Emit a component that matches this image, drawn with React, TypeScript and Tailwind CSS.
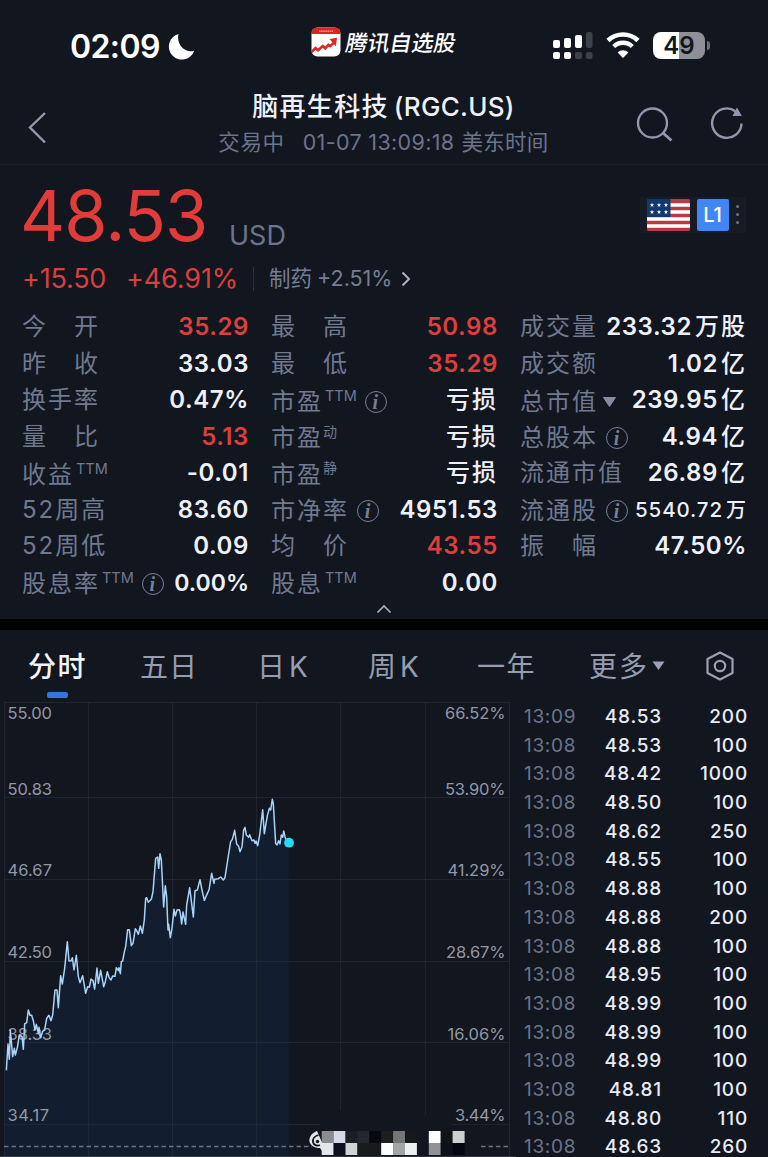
import React from "react";

type Tone = "up" | "plain";

interface Stat {
  label: string;
  sup?: string;
  info?: boolean;
  caret?: boolean;
  value?: string;
  unit?: string;
  tone?: Tone;
  small?: boolean;
  tight?: boolean;
  low?: boolean;
}

const columns: Stat[][] = [
  [
    { label: "今　开", value: "35.29", tone: "up" },
    { label: "昨　收", value: "33.03" },
    { label: "换手率", value: "0.47%" },
    { label: "量　比", value: "5.13", tone: "up" },
    { label: "收益", sup: "TTM", value: "-0.01", low: true },
    { label: "52周高", value: "83.60" },
    { label: "52周低", value: "0.09" },
    { label: "股息率", sup: "TTM", info: true, value: "0.00%", low: true, tight: true },
  ],
  [
    { label: "最　高", value: "50.98", tone: "up" },
    { label: "最　低", value: "35.29", tone: "up" },
    { label: "市盈", sup: "TTM", info: true, unit: "亏损", low: true },
    { label: "市盈", sup: "动", unit: "亏损", low: true },
    { label: "市盈", sup: "静", unit: "亏损", low: true },
    { label: "市净率", info: true, value: "4951.53", low: true },
    { label: "均　价", value: "43.55", tone: "up" },
    { label: "股息", sup: "TTM", value: "0.00", low: true },
  ],
  [
    { label: "成交量", value: "233.32", unit: "万股" },
    { label: "成交额", value: "1.02", unit: "亿" },
    { label: "总市值", caret: true, value: "239.95", unit: "亿", low: true },
    { label: "总股本", info: true, value: "4.94", unit: "亿", low: true },
    { label: "流通市值", value: "26.89", unit: "亿" },
    { label: "流通股", info: true, value: "5540.72", unit: "万", small: true, low: true },
    { label: "振　幅", value: "47.50%" },
  ],
];

const trades: [string, string, string][] = [
  ["13:09", "48.53", "200"],
  ["13:08", "48.53", "100"],
  ["13:08", "48.42", "1000"],
  ["13:08", "48.50", "100"],
  ["13:08", "48.62", "250"],
  ["13:08", "48.55", "100"],
  ["13:08", "48.88", "100"],
  ["13:08", "48.88", "200"],
  ["13:08", "48.88", "100"],
  ["13:08", "48.95", "100"],
  ["13:08", "48.99", "100"],
  ["13:08", "48.99", "100"],
  ["13:08", "48.99", "100"],
  ["13:08", "48.81", "100"],
  ["13:08", "48.80", "110"],
  ["13:08", "48.63", "260"],
];

// Intraday line, in thirds of a pixel, measured from 78px below the plot's top.
const series =
  "19,871 24,792 28,838 31,750 38,830 43,805 46,825 52,802 58,765 66,770 70,808 74,732 80,728 85,690 90,706 95,706 100,722 105,750 109,733 115,760 117,742 122,773 128,754 134,750 140,715 147,706 153,722 158,705 165,630 171,630 175,683 182,587 187,612 194,565 202,485 207,543 213,543 217,533 222,570 229,526 235,590 240,608 248,587 257,640 263,620 268,622 273,597 279,602 284,627 291,564 295,610 302,571 311,620 316,605 322,575 327,592 333,600 338,588 345,589 349,563 355,572 357,563 361,581 364,545 368,543 372,520 377,500 383,449 388,449 394,497 399,490 406,446 412,456 415,463 421,438 427,460 433,420 437,355 440,353 445,367 454,358 459,335 467,235 473,231 476,265 480,221 484,240 491,381 496,317 500,350 504,450 506,433 511,473 516,445 522,388 526,408 531,390 538,389 541,400 545,432 549,396 557,433 560,375 569,323 580,411 585,332 592,330 600,299 606,330 613,361 622,340 627,330 635,280 642,310 644,298 655,296 662,291 670,300 675,293 685,228 692,185 697,178 704,151 710,192 716,199 720,215 726,200 731,150 735,142 739,165 746,172 749,164 756,182 762,180 765,190 768,183 773,197 779,165 788,89 793,161 802,107 808,85 812,90 817,58 820,72 827,190 831,195 836,182 840,192 844,165 848,172 851,153 855,170 860,185 866,188";

const leftAxis: [string, number, number][] = [
  ["55.00", 719, 44.5],
  ["50.83", 794.7, 44.5],
  ["46.67", 876.2, 44.5],
  ["42.50", 958.2, 44.5],
  ["38.33", 1039.5, 44.5],
  ["34.17", 1121, 41.5],
];

const rightAxis: [string, number, number][] = [
  ["66.52%", 719, 60.5],
  ["53.90%", 794.7, 60.5],
  ["41.29%", 876.2, 58],
  ["28.67%", 958.2, 59.5],
  ["16.06%", 1039.5, 58],
  ["3.44%", 1121, 50.5],
];

const mosaic = [
  ["#8b8c90", "#d4d9e6", "#1b1e22", "#23272e", "#060910", "#1b1f20", "#747676", "#15181c", "#12161f", "#fbfdff", "#111417", "#cacfd0"],
  ["#e4e6ec", "#0d111c", "#d0d4d4", "#191c1b", "#191a1b", "#fcfefe", "#a2a4a6", "#ecf0f0", "#11151f", "#929296", "#0f111a", "#03070f"],
];

function InfoIcon() {
  return (
    <span className="flex h-[22px] w-[22px] shrink-0 items-center justify-center rounded-full border-[1.5px] border-[#767f98] pr-[1px] font-['Liberation_Serif',serif] text-[20px] leading-[18px] font-bold text-[#767f98] italic">
      i
    </span>
  );
}

function StatRow({ stat }: { stat: Stat }) {
  const tone = stat.tone === "up" ? "text-[#db3f3e]" : "text-[#eef1f9]";
  const size = stat.small
    ? "text-[20.5px] leading-[36px] font-medium tracking-[0.9px]"
    : stat.tight
      ? "text-[23px] leading-[36px] font-semibold tracking-[0px]"
      : "text-[24px] leading-[36px] font-semibold tracking-[0.6px]";
  return (
    <div className="flex h-[36.5px] items-center justify-between whitespace-nowrap">
      <div className={`flex items-center text-[#70798f] ${stat.low ? "pt-[3px]" : ""}`}>
        <span className="text-[24px] leading-[36px] tracking-[2px]">{stat.label}</span>
        {stat.sup && (
          <span className={stat.sup === "TTM" ? "-mt-[12px] ml-[2px] text-[14.5px] leading-[18px] tracking-[0px]" : "-mt-[13px] text-[14px] leading-[18px]"}>
            {stat.sup}
          </span>
        )}
        {stat.info && (
          <span className="ml-[8px] block">
            <InfoIcon />
          </span>
        )}
        {stat.caret && (
          <svg className="ml-[5px] h-[10px] w-[13px]" viewBox="0 0 13 10">
            <path d="M.5.5h12l-6 9z" fill="#858da3" stroke="#858da3" strokeLinejoin="round" />
          </svg>
        )}
      </div>
      <div className={`flex items-center ${tone} ${stat.unit ? "" : "-mr-[1px]"}`}>
        {stat.value && <span className={size}>{stat.value}</span>}
        {stat.unit && (
          <span className={stat.small ? "ml-[3px] text-[20px] leading-[36px] font-medium" : "-mr-[1px] ml-[3px] text-[24px] leading-[36px] font-medium tracking-[2px]"}>
            {stat.unit}
          </span>
        )}
      </div>
    </div>
  );
}

function StatusBar() {
  return (
    <div className="flex h-[88px] items-start text-white">
      <span className="mt-[27px] ml-[70px] w-[98px] text-[32px] leading-[40px] font-semibold tracking-[-0.6px] whitespace-nowrap">02:09</span>
      <svg className="mt-[33px] h-[27px] w-[27px]" viewBox="0 0 27 27">
        <path d="M10.500 1A13 13 0 1 0 26.200 17.700C18 20.500 8 12.500 10.500 1Z" fill="#fff" />
      </svg>
      <svg className="mt-[27px] ml-[116px] h-[30px] w-[30px]" viewBox="0 0 30 30">
        <rect x="0.500" y="0.500" width="29" height="29" rx="6" fill="#fff" />
        <path d="M.5 7V6a5.500 5.500 0 0 1 5.500-5.500h18A5.500 5.500 0 0 1 29.500 6v1z" fill="#dd2420" />
        <path d="M8 4.200h14" stroke="#ee9792" strokeWidth="1.600" strokeDasharray="1.600 .5" />
        <path d="M.5 25l4-4 2.500 2.200 4.800-4.200 2.500 2.300 3-3.300 2 1.200 5-5" fill="none" stroke="#dc2725" strokeWidth="2.600" />
        <path d="M18.500 12l7.500-1.200-1.200 8.500z" fill="#dc2725" />
      </svg>
      <span className="mt-[26px] ml-[5px] w-[111px] -skew-x-[10deg] text-[22px] leading-[34px] font-medium whitespace-nowrap">腾讯自选股</span>
      <svg className="mt-[32px] ml-[96px] h-[28px] w-[40px]" viewBox="0 0 40 28" fill="#fff">
        <rect x="0" y="8" width="7" height="8" rx="2" />
        <rect x="11" y="6" width="7" height="10" rx="2" />
        <rect x="22" y="3" width="7" height="13" rx="2" />
        <rect x="33" y="0" width="6.500" height="16" rx="2" fill="#3d414a" />
        <rect x="0" y="20" width="7" height="7" rx="2" />
        <rect x="11" y="20" width="7" height="7" rx="2" />
        <rect x="22" y="20" width="7" height="7" rx="2" fill="#3d414a" />
        <rect x="33" y="20" width="6.500" height="7" rx="2" fill="#3d414a" />
      </svg>
      <svg className="mt-[32px] ml-[13px] h-[26px] w-[34px]" viewBox="0 0 34 26" fill="none">
        <path d="M2 8.500a21.800 21.800 0 0 1 30 0" stroke="#fff" strokeWidth="4.600" />
        <path d="M7.700 14.500a13.400 13.400 0 0 1 18.600 0" stroke="#fff" strokeWidth="4.400" />
        <path d="M17 26l-5.400-5.600a7.800 7.800 0 0 1 10.800 0z" fill="#fff" />
      </svg>
      <div className="mt-[32px] ml-[13px] flex items-center">
        <div className="flex h-[27px] w-[52px] items-center justify-center rounded-[8px] bg-[linear-gradient(90deg,#fff_50%,#8e9095_50%)] text-[24px] leading-[27px] font-semibold text-[#12161f]">
          49
        </div>
        <div className="ml-[1.5px] h-[9px] w-[3px] rounded-r-full bg-[#6c6f77]" />
      </div>
    </div>
  );
}

function TitleBar() {
  return (
    <div className="flex h-[77px] items-start border-b border-[#1a1d27]">
      <svg className="mt-[23px] ml-[27px] h-[34px] w-[20px]" viewBox="0 0 20 34" fill="none">
        <path d="M18 2L3 16.500 18 31.500" stroke="#9098ae" strokeWidth="2.400" />
      </svg>
      <div className="ml-[152px] flex w-[369px] flex-col items-center whitespace-nowrap">
        <div className="flex items-center text-[#eef1f9]">
          <span className="text-[26px] leading-[37px] font-medium tracking-[1.3px]">脑再生科技</span>
          <span className="ml-[5px] text-[26px] leading-[37px] font-medium tracking-[0.3px]">(RGC.US)</span>
        </div>
        <div className="flex text-[21.5px] leading-[35px] text-[#6b748b]">
          <span className="tracking-[0.6px]">交易中</span>
          <span className="ml-[18px] tracking-[0.35px]">01-07 13:09:18</span>
          <span className="ml-[7px] tracking-[0.3px]">美东时间</span>
        </div>
      </div>
      <svg className="mt-[18px] ml-[68px] h-[36px] w-[38px]" viewBox="0 0 38 36" fill="none" stroke="#9098ae" strokeWidth="2.400">
        <circle cx="16.500" cy="17" r="14.500" />
        <path d="M27 27l8.500 7.500" strokeWidth="2.800" />
      </svg>
      <svg className="mt-[18px] ml-[35px] h-[36px] w-[36px]" viewBox="0 0 36 36" fill="none">
        <path d="M32.500 17.500A14.700 14.700 0 1 1 26.500 5.300" stroke="#9098ae" strokeWidth="2.400" />
        <path d="M28 1.500L32.800 10 23.500 10z" fill="#9098ae" />
      </svg>
    </div>
  );
}

function Star({ x, y }: { x: number; y: number }) {
  return <path transform={`translate(${x} ${y})`} d="M0-2.200L.6-.7 2.200-.7.9.3 1.400 1.900 0 .9-1.400 1.900-.9.3-2.200-.7-.6-.7z" fill="#fff" />;
}

function Quote() {
  return (
    <div className="flex h-[144px] items-start justify-between">
      <div className="pl-[22px] whitespace-nowrap">
        <div className="flex h-[95px] items-start">
          <span className="mt-[15px] -ml-[2px] w-[209px] text-[70px] leading-[72px] tracking-[-0.9px] text-[#e13b3a]">48.53</span>
          <span className="mt-[53px] text-[27px] leading-[35px] text-[#6b748b]">USD</span>
        </div>
        <div className="flex h-[37px] items-center text-[27px] leading-[37px] text-[#d83f3f]">
          <span className="w-[104px] tracking-[-0.2px]">+15.50</span>
          <span className="w-[127px] tracking-[-0.1px]">+46.91%</span>
          <span className="h-[24px] w-px bg-[#2b303d]" />
          <span className="ml-[15px] text-[21.5px] text-[#757e95]">制药</span>
          <span className="ml-[5px] w-[78px] text-[21.5px] text-[#757e95]">+2.51%</span>
          <svg className="ml-[6px] h-[16px] w-[10px]" viewBox="0 0 10 16" fill="none">
            <path d="M1.500 1.500L8 8l-6.500 6.500" stroke="#aab1c2" strokeWidth="2" />
          </svg>
        </div>
      </div>
      <div className="mt-[32px] mr-[22px] flex h-[36px] w-[106px] items-center bg-[#171b24] pl-[7px]">
        <svg className="h-[32px] w-[43px]" viewBox="0 0 43 32">
          <rect width="43" height="32" rx="1.500" fill="#b83a43" />
          <path d="M0 6h43M0 13h43M0 20h43M0 27h43" stroke="#fff" strokeWidth="3.600" />
          <rect width="23.500" height="18" fill="#12396f" />
          <Star x={5} y={6} />
          <Star x={12} y={6} />
          <Star x={19} y={6} />
          <Star x={5} y={13} />
          <Star x={12} y={13} />
          <Star x={19} y={13} />
        </svg>
        <div className="ml-[6.5px] h-[32px] w-[32px] rounded-[2px] bg-[#4285f5] text-center text-[20px] leading-[33px] font-medium text-white">L1</div>
        <div className="ml-[7px] flex flex-col gap-[5px] pb-[1px]">
          <span className="h-[3px] w-[3px] rounded-full bg-[#70747e]" />
          <span className="h-[3px] w-[3px] rounded-full bg-[#70747e]" />
          <span className="h-[3px] w-[3px] rounded-full bg-[#70747e]" />
        </div>
      </div>
    </div>
  );
}

function Tabs() {
  return (
    <div className="flex h-[72px] items-start text-[28px] leading-[40px] whitespace-nowrap text-[#969daf]">
      <div className="mt-[17px] ml-[28px] flex w-[112px] flex-col font-medium text-[#f2f4fa]">
        <span className="tracking-[1.5px]">分时</span>
        <span className="mt-[5px] ml-[19px] h-[6px] w-[21px] rounded-[2px] bg-[#3376de]" />
      </div>
      <span className="mt-[17px] w-[117px] tracking-[1px]">五日</span>
      <span className="mt-[17px] w-[111px]">日<span className="ml-[4px]">K</span></span>
      <span className="mt-[17px] w-[109px]">周<span className="ml-[4px]">K</span></span>
      <span className="mt-[17px] w-[112px] tracking-[1.5px]">一年</span>
      <span className="mt-[17px] tracking-[2px]">更多</span>
      <svg className="mt-[31px] ml-[3px] h-[10px] w-[13px]" viewBox="0 0 13 10">
        <path d="M.5.5h12l-6 8.500z" fill="#9aa3b5" />
      </svg>
      <svg className="mt-[20.5px] ml-[41px] h-[30px] w-[28px]" viewBox="0 0 28 30" fill="none" stroke="#9ba2b4" strokeWidth="2.200" strokeLinejoin="round">
        <path d="M14 1.500L26.500 8v14L14 28.500 1.500 22V8z" />
        <circle cx="14" cy="15" r="5.200" />
      </svg>
    </div>
  );
}

function Chart() {
  return (
    <svg className="h-[455px] w-[516px] shrink-0" viewBox="0 702 516 455" fill="none">
      <polygon transform="translate(0 780) scale(.33333)" points={`${series} 866,1131 13,1131 13,871`} fill="#121e2f" />
      <g stroke="#262b38" strokeOpacity="0.7">
        <path d="M4.500 702V1157M88.500 702V1157M172.500 702V1157M256.500 702V1157M340.500 702V1110M425.500 702V1115M509.500 702V1157" />
        <path d="M4 702.500H510M4 797.500H510M4 879.500H510M4 961.500H510M4 1042.500H510M4 1124.500H320M452 1124.500H510" />
        <path d="M0 1156.500H516" strokeWidth="1" stroke="#3a404e" />
      </g>
      <path d="M4 1146.500H312M481 1146.500H510" stroke="#6b7385" strokeWidth="1.500" strokeDasharray="4.500 3" />
      <g fill="#9298a5" fontSize="16.5">
        {leftAxis.map(([t, y, w]) => (
          <text key={t} x="7.500" y={y} textLength={w}>{t}</text>
        ))}
        {rightAxis.map(([t, y, w]) => (
          <text key={t} x={505.5 - w} y={y} textLength={w}>{t}</text>
        ))}
      </g>
      <polyline transform="translate(0 780) scale(.33333)" points={series} stroke="#a9d3f8" strokeWidth="4.500" strokeLinejoin="round" />
      <circle cx="289" cy="842.700" r="4.900" fill="#24dcf8" />
      {mosaic.map((row, r) =>
        row.map((c, i) => <rect key={`${r}-${i}`} x={321.7 + i * 11.9} y={1131 + r * 12} width="12" height="12" fill={c} />)
      )}
      <path d="M317 1131c-6 2-9 8-7 12 2 4 6 5 10 5l4 6v-7" fill="#e4e6ea" />
      <path d="M318.500 1135c-4 1-6 4-5.500 7s4 4.500 7 3" stroke="#12161f" strokeWidth="1.800" />
      <circle cx="317.500" cy="1141.500" r="1.700" fill="#12161f" />
    </svg>
  );
}

export default function App() {
  return (
    <main className="flex h-[1157px] w-[768px] flex-col overflow-hidden bg-[#12161f] font-['Inter','Noto_Sans_CJK_SC',sans-serif]">
      <StatusBar />
      <TitleBar />
      <Quote />
      <section className="flex h-[292px] gap-[23px] pl-[22px]">
        {columns.map((col, i) => (
          <div key={i} className="w-[226px]">
            {col.map((s, j) => (
              <StatRow key={j} stat={s} />
            ))}
          </div>
        ))}
      </section>
      <div className="flex h-[18px] justify-center">
        <svg className="mt-[3px] h-[10px] w-[16px]" viewBox="0 0 16 10" fill="none">
          <path d="M1.500 8.500L8 2l6.500 6.500" stroke="#a9afbd" strokeWidth="1.700" />
        </svg>
      </div>
      <div className="h-[11px] shrink-0 bg-black" />
      <Tabs />
      <section className="flex h-[455px]">
        <Chart />
        <div className="flex flex-1 flex-col pt-[1px] pr-[20px] pl-[8px] text-[19px] leading-[28.7px] whitespace-nowrap">
          {trades.map(([time, price, volume], i) => (
            <div key={i} className="flex h-[28.7px] shrink-0">
              <span className="w-[60px] tracking-[0.7px] text-[#6b748b]">{time}</span>
              <span className="w-[78px] text-right font-medium tracking-[0.8px] text-[#e8ebf3]">{price}</span>
              <span className="flex-1 text-right font-medium tracking-[0.8px] text-[#e8ebf3]">{volume}</span>
            </div>
          ))}
        </div>
      </section>
    </main>
  );
}
